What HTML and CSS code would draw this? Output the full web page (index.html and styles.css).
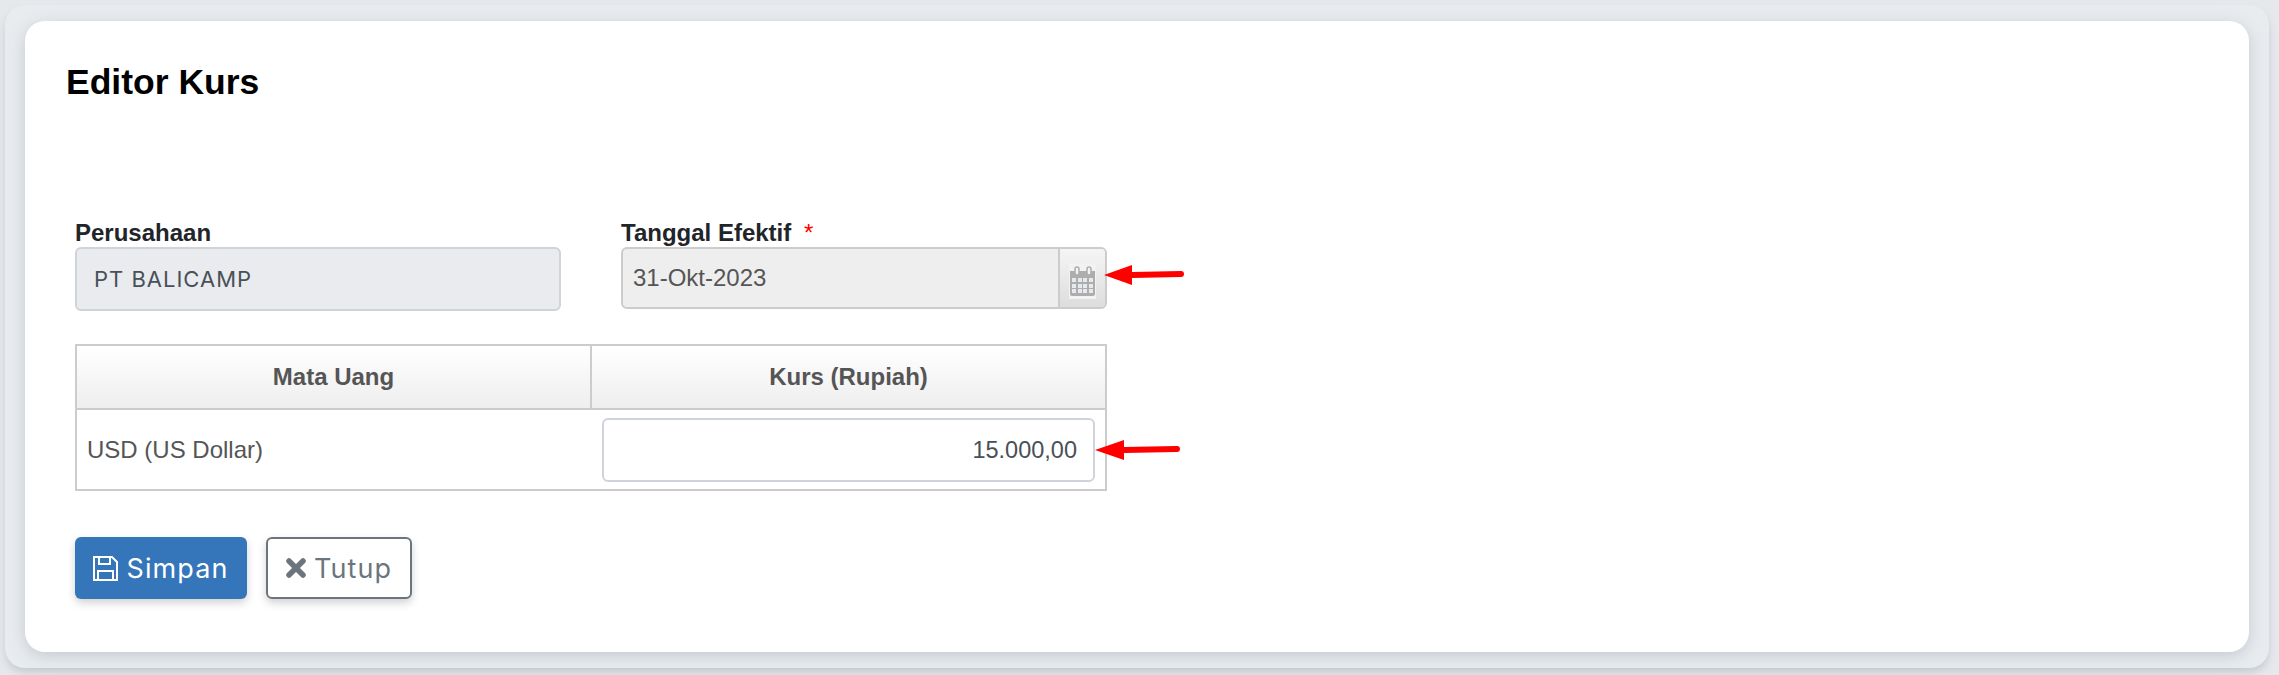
FILE: index.html
```html
<html>

<head>
  <title>Editor Kurs</title>
  <meta name="viewport" content="width=device-width, initial-scale=1">
  <link rel="stylesheet" href="styles.css">
</head>

<body>
  <div class="panel">
    <div class="card">
      <h2 class="title">Editor Kurs</h2>

      <div class="form-row">
        <div class="field">
          <label class="field-label">Perusahaan</label>
          <div class="input-readonly">PT BALICAMP</div>
        </div>

        <div class="field field-date">
          <label class="field-label">Tanggal Efektif <span class="required">*</span></label>
          <div class="date-group">
            <div class="date-value">31-Okt-2023</div>
            <div class="date-addon">
              <svg class="calendar" width="27" height="35" viewBox="0 0 27 35">
                <rect x="0" y="0" width="27" height="35" fill="#f2f2f2" />
                <path d="M1 7h25v23a2 2 0 0 1-2 2H3a2 2 0 0 1-2-2z" fill="#adadad" />
                <path d="M3 14h4v4H3zM9 14h4v4H9zM14 14h4v4h-4zM20 14h4v4h-4zM3 20h4v4H3zM9 20h4v4H9zM14 20h4v4h-4zM20 20h4v4h-4zM3 25h4v4H3zM9 25h4v4H9zM14 25h4v4h-4zM20 25h4v4h-4z" fill="#e6eaee" />
                <rect x="6" y="3" width="4" height="8" rx="2" fill="#f2f2f2" stroke="#adadad" stroke-width="1.5" />
                <rect x="18" y="3" width="4" height="8" rx="2" fill="#f2f2f2" stroke="#adadad" stroke-width="1.5" />
              </svg>
            </div>
          </div>
          <svg class="arrow arrow-date" width="80" height="22" viewBox="0 0 80 22">
            <path d="M0 11L28 1v7l49-1a3 3 0 0 1 0 6l-49 1v7z" fill="#ff0000" />
          </svg>
        </div>
      </div>

      <div class="rate-wrap">
        <table class="rate-table">
          <tr>
            <th class="col-currency">Mata Uang</th>
            <th>Kurs (Rupiah)</th>
          </tr>
          <tr>
            <td>USD (US Dollar)</td>
            <td class="cell-input">
              <div class="input-rate">15.000,00</div>
            </td>
          </tr>
        </table>
        <svg class="arrow arrow-rate" width="86" height="22" viewBox="0 0 86 22">
          <path d="M0 11L29 1v7l53-1a3 3 0 0 1 0 6l-53 1v7z" fill="#ff0000" />
        </svg>
      </div>

      <div class="actions">
        <button class="button button-save">
          <svg width="25" height="25" viewBox="0 0 25 25">
            <path d="M1 1h18l5 5v18H1z" fill="none" stroke="#fff" stroke-width="2" />
            <path d="M6 1v7h11V1M5 24v-9h15v9" fill="none" stroke="#fff" stroke-width="2" />
          </svg>
          Simpan
        </button>
        <button class="button button-close">
          <svg width="20" height="20" viewBox="0 0 20 20">
            <path d="M3 3l14 14M17 3L3 17" fill="none" stroke="#6c757d" stroke-width="5.5" stroke-linecap="round" />
          </svg>
          Tutup
        </button>
      </div>
    </div>
  </div>
</body>

</html>
```

FILE: styles.css
```css
body {
  font-family: "Liberation Sans", Arial, sans-serif;
  margin: 0;
  padding: 5px 10px 7px 5px;
  height: 663px;
  background-color: #e6e9ec;
  overflow: hidden;
}

.panel {
  height: 100%;
  box-sizing: border-box;
  padding: 16px 20px;
  border-radius: 20px;
  background-color: #e9ecef;
  box-shadow: 0 5px 8px -1px rgba(130, 140, 155, 0.35);
}

.card {
  height: 100%;
  box-sizing: border-box;
  padding: 41px 42px 0;
  border-radius: 20px;
  background-color: #fff;
  box-shadow: 0 4px 16px rgba(130, 140, 155, 0.35);
}

.title {
  font-size: 35.5px;
  line-height: 40px;
  margin: 0 0 0 -1px;
  color: #000;
}

.form-row {
  display: flex;
  gap: 60px;
  margin-top: 117px;
  padding-left: 8px;
}

.field {
  width: 486px;
}

.field-date {
  position: relative;
}

.field-label {
  display: block;
  font-size: 24px;
  font-weight: bold;
  line-height: 27px;
  color: #212529;
}

.required {
  color: #ff0000;
  font-weight: normal;
  margin-left: 6px;
}

.input-readonly {
  box-sizing: border-box;
  height: 64px;
  margin-top: 1px;
  padding: 0 17px;
  font-family: Inter, sans-serif;
  font-size: 22px;
  letter-spacing: 1px;
  line-height: 60px;
  color: #495057;
  background-color: #e9ebef;
  border: 2px solid #ced4da;
  border-radius: 6px;
}

.date-group {
  display: flex;
  height: 62px;
  box-sizing: border-box;
  margin-top: 1px;
  border: 2px solid #cccccc;
  border-radius: 6px;
  background-color: #eeeeee;
}

.date-value {
  flex: 1;
  padding: 0 10px;
  font-size: 24px;
  line-height: 58px;
  color: #555555;
}

.date-addon {
  display: flex;
  align-items: center;
  justify-content: center;
  width: 45px;
  border-left: 2px solid #cccccc;
  background: linear-gradient(#f5f5f5, #dddddd);
  border-radius: 0 4px 4px 0;
}

.calendar {
  margin-top: 6px;
}

.arrow {
  position: absolute;
}

.arrow-date {
  left: 483px;
  top: 45px;
}

.rate-wrap {
  position: relative;
  width: 1032px;
  margin-top: 33px;
  margin-left: 8px;
}

.rate-table {
  width: 1032px;
  border-collapse: collapse;
  table-layout: fixed;
  border: 2px solid #cccccc;
}

.rate-table th {
  height: 64px;
  padding: 0;
  font-size: 24px;
  color: #555555;
  background: linear-gradient(#ffffff, #eeeeee);
  border: 2px solid #cccccc;
}

.col-currency {
  width: 513px;
}

.rate-table td {
  height: 81px;
  padding: 0 10px;
  font-size: 24px;
  color: #555555;
}

.rate-table td.cell-input {
  padding: 0 10px 0 11px;
}

.input-rate {
  box-sizing: border-box;
  height: 64px;
  padding: 0 16px;
  font-size: 23.5px;
  line-height: 60px;
  text-align: right;
  color: #495057;
  background-color: #fff;
  border: 2px solid #ced4da;
  border-radius: 6px;
}

.arrow-rate {
  left: 1020px;
  top: 95px;
}

.actions {
  display: flex;
  gap: 19px;
  margin-top: 46px;
  margin-left: 8px;
}

.button {
  display: flex;
  align-items: center;
  justify-content: center;
  gap: 8px;
  box-sizing: border-box;
  height: 62px;
  padding: 0;
  font-family: Inter, sans-serif;
  font-size: 27px;
  letter-spacing: 1.1px;
  border-radius: 6px;
  box-shadow: 0 4px 8px rgba(0, 0, 0, 0.18);
  cursor: pointer;
}

.button-save {
  width: 172px;
  color: #fff;
  background-color: #3575b9;
  border: none;
}

.button-close {
  width: 146px;
  color: #6c757d;
  background-color: #fff;
  border: 2px solid #6c757d;
}
```
